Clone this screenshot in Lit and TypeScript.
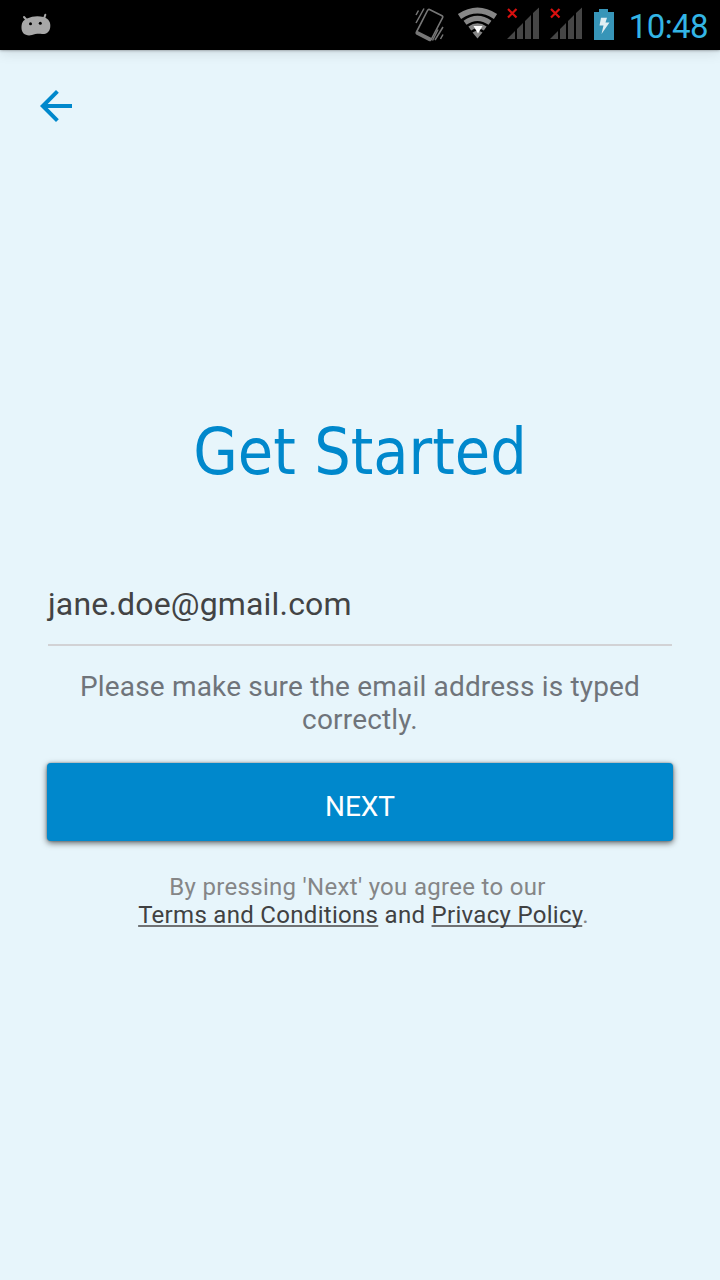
import { LitElement, html, css } from "lit";
import { customElement } from "lit/decorators.js";

@customElement("status-bar")
class StatusBar extends LitElement {
  static styles = css`
    :host { display: flex; align-items: center; height: 50px; background: #000; position: relative;
      box-shadow: 0 0 3px rgba(0,0,0,.45), 0 3px 12px rgba(0,0,0,.1); }
    svg { display: block; flex: none; }
    .droid { margin-left: 20px; }
    .right { margin-left: auto; display: flex; align-items: center; padding-right: 12px; }
    .vibrate { margin-right: 12px; }
    .wifi { margin-right: 9px; }
    .signal { margin-right: 10px; }
    .time { width: 81px; font: 400 33px/47px Roboto, sans-serif; color: #33b5e5; margin: 0 0 0 12px; letter-spacing: -.6px; padding-top: 3px; text-align: right; white-space: nowrap; }
  `;
  signal() {
    return html`<svg class="signal" width="33" height="50" viewBox="0 0 33 50">
      <path d="M0 39L8 31V39ZM10 39V29L16 23V39ZM18 39V21L24 15V39ZM26 39V13L32 7.500V39Z" fill="#464646"/>
      <path d="M1 9L9.500 17.500M9.500 9L1 17.500" stroke="#d9100f" stroke-width="2.200"/>
    </svg>`;
  }
  render() {
    return html`
      <svg class="droid" width="32" height="50" viewBox="0 0 32 50">
        <path d="M7 18.500Q15 15 23.500 17C29 18.500 31 23 30.200 27.500C29.500 32.500 26 34.300 22 34C18 33.600 15 34 12 35C6 36.500 1.500 33.500 1.500 28C1.600 23 2.500 20.500 7 18.500Z" fill="#a7a7a7"/>
        <path d="M4 17L7.500 21M25.300 14.800L23.500 20" stroke="#a7a7a7" stroke-width="2" stroke-linecap="round"/>
        <circle cx="10.500" cy="23.700" r="1.500"/><circle cx="20.300" cy="23.200" r="1.500"/>
      </svg>
      <div class="right">
        <svg class="vibrate" width="30" height="50" viewBox="0 0 30 50">
          <g fill="none" stroke="#777">
            <path d="M14.500 9.500L27 15.800Q28.200 16.500 27.500 17.800L16.200 39.500Q15.500 41 14.200 40.300L2 34Q.8 33.300 1.500 32L12.500 10.500Q13.300 9 14.500 9.500Z" stroke-width="1.600"/>
            <path d="M3.500 10.500L1 15M9 8.500L1 23M23 29.500L17.500 40.500M28 27L20 40M28 34.500L25.500 39" stroke-width="1.500"/>
          </g>
          <path d="M1.700 30.500L16.600 38Q15.500 41.500 14 40.500L2 34Q.5 33 1.700 30.500Z" fill="#777"/>
        </svg>
        <svg class="wifi" width="41" height="50" viewBox="0 0 41 50">
          <g fill="none" stroke="#868686">
            <path d="M2.500 16.500Q20.500 4.500 38.500 16.500" stroke-width="5.800"/>
            <path d="M8 22.800Q20.500 14 33 22.800" stroke-width="5"/>
            <path d="M12.800 28.500Q20.500 23 28.200 28.500" stroke-width="4.800"/>
          </g>
          <path d="M15.500 32.500Q20.500 29 25.500 32.500L20.500 38.500Z" fill="#868686"/>
          <path d="M16.500 26H25.500L21 33.500Z" fill="#fff"/>
        </svg>
        ${this.signal()}${this.signal()}
        <svg class="battery" width="22" height="50" viewBox="0 0 22 50">
          <path d="M1 12H6V9H15V12H21V40H1Z" fill="#3795b8"/>
          <path d="M8 17.800H14L12.500 22.500H16.500L8.500 34L10.500 25.500H6.500Z" fill="#e0eef3"/>
        </svg>
        <span class="time">10:48</span>
      </div>`;
  }
}

@customElement("app-root")
class AppRoot extends LitElement {
  static styles = css`
    :host { display: block; height: 1280px; background: #e7f5fb; font-family: Roboto, sans-serif; overflow: hidden; }
    main { display: flex; flex-direction: column; padding: 0 47px; }
    .back { display: block; width: 32px; height: 32px; margin: 40px 0 0 -7px; }
    h1 { margin: 293px 0 0; font: 400 64px/75px "DejaVu Sans Condensed", "DejaVu Sans", sans-serif; font-stretch: condensed; color: #0088cc; text-align: center; white-space: nowrap; }
    .field { margin: 95px 1px 0; height: 59px; border-bottom: 2px solid #d2d2d5; font-size: 32px; line-height: 38px; letter-spacing: .17px; color: #424344; }
    .hint { margin: 24px 0 0; font-size: 28px; line-height: 33px; letter-spacing: .18px; color: #6f747a; text-align: center; }
    .next { margin: 27px 0 0; height: 78px; padding: 9px 0 0; border: 0; border-radius: 4px; background: #0088cc; color: #fff; font: 400 28px/33px Roboto, sans-serif;
      box-shadow: 0 2px 6px rgba(0,0,0,.6), 0 0 2px rgba(0,0,0,.35); }
    .terms { margin: 32px 0 0; font-size: 24px; line-height: 28px; letter-spacing: .3px; color: #858687; text-align: center; }
    .terms div { white-space: nowrap; }
    .first { margin-right: 5px; }
    .second { margin-left: 7px; }
    .dark { color: #404142; }
    .link { color: #404142; text-decoration: underline; text-decoration-color: #707274; text-decoration-thickness: 2px; text-underline-offset: 2px; text-decoration-skip-ink: none; }
  `;
  render() {
    return html`
      <status-bar></status-bar>
      <main>
        <svg class="back" viewBox="0 0 32 32"><path d="M32 14V18H7.700L18.800 29.200L16 32L0 16L16 0L18.800 2.800L7.700 14Z" fill="#0088cc"/></svg>
        <h1>Get Started</h1>
        <div class="field">jane.doe@gmail.com</div>
        <div class="hint">Please make sure the email address is typed<br>correctly.</div>
        <button class="next">NEXT</button>
        <div class="terms">
          <div class="first">By pressing 'Next' you agree to our</div>
          <div class="second"><span class="link">Terms and Conditions</span><span class="dark"> and </span><span class="link">Privacy Policy</span>.</div>
        </div>
      </main>`;
  }
}
